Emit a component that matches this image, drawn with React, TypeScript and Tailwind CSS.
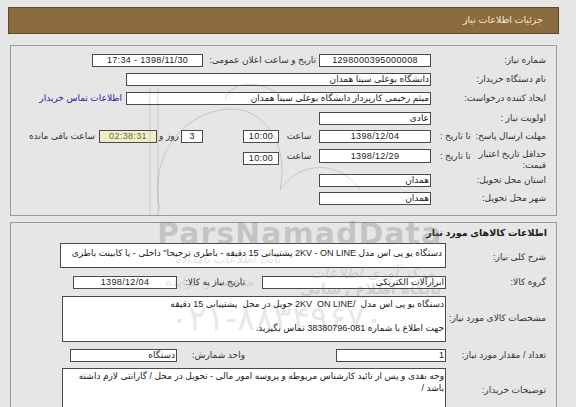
import React from "react";

const Box = ({ className = "", children }: { className?: string; children?: React.ReactNode }) => (
  <div className={`bg-white border border-[#4a4a4a] shrink-0 flex items-center text-[9px] leading-none text-[#1a1a1a] overflow-hidden whitespace-nowrap ${className}`}>
    {children}
  </div>
);

export default function App() {
  return (
    <div
      dir="rtl"
      className="relative w-[576px] h-[407px] overflow-hidden bg-[#e6e6e6] font-['Liberation_Sans','DejaVu_Sans',sans-serif] text-[9px] text-[#333]"
    >
      {/* Header */}
      <div className="pt-[7px] pl-[8px] pr-[17px]">
        <div className="h-[27px] bg-[#8c6b3f] border border-[#5e4626] flex items-center pr-[15px] text-[#f3ead8] text-[9.5px]">
          جزئیات اطلاعات نیاز
        </div>
      </div>

      {/* Panel 1 */}
      <div className="mt-[11px] ml-[10px] mr-[19px] h-[171px] border border-[#9a9a9a] pt-[8px]">
        {/* row 1 */}
        <div className="flex items-center h-[13px]">
          <div className="w-[125px] pr-[10px] shrink-0">شماره نیاز:</div>
          <Box className="w-[112px] h-[13px] justify-center tracking-[0.35px]">1298000395000008</Box>
          <div className="w-[116px] pr-[3px] shrink-0 whitespace-nowrap">تاریخ و ساعت اعلان عمومی:</div>
          <Box className="w-[111px] h-[13px] justify-center tracking-[0.35px]">1398/11/30 - 17:34</Box>
        </div>
        {/* row 2 */}
        <div className="flex items-center h-[13px] mt-[6px]">
          <div className="w-[125px] pr-[10px] shrink-0">نام دستگاه خریدار:</div>
          <Box className="w-[305px] h-[13px] pr-[1px]">دانشگاه بوعلی سینا همدان</Box>
        </div>
        {/* row 3 */}
        <div className="flex items-center h-[13px] mt-[6px]">
          <div className="w-[125px] pr-[10px] shrink-0">ایجاد کننده درخواست:</div>
          <Box className="w-[305px] h-[13px] pr-[1px]">میثم رحیمی کارپرداز دانشگاه بوعلی سینا همدان</Box>
          <div className="mr-[4px] text-[#2323a8] whitespace-nowrap">اطلاعات تماس خریدار</div>
        </div>
        {/* row 4 */}
        <div className="flex items-center h-[13px] mt-[7px]">
          <div className="w-[125px] pr-[10px] shrink-0">اولویت نیاز :</div>
          <Box className="w-[112px] h-[13px] pr-[1px]">عادی</Box>
        </div>
        {/* row 5 */}
        <div className="flex items-center h-[13px] mt-[5px]">
          <div className="w-[125px] pr-[10px] pl-[9px] shrink-0 flex justify-between whitespace-nowrap">
            <span>مهلت ارسال پاسخ:</span>
            <span>تا تاریخ :</span>
          </div>
          <Box className="w-[112px] h-[13px] justify-center tracking-[0.35px]">1398/12/04</Box>
          <div className="w-[40px] text-center shrink-0">ساعت</div>
          <Box className="w-[36px] h-[13px] justify-center tracking-[0.35px]">10:00</Box>
          <div className="w-[40px] shrink-0" />
          <Box className="w-[22px] h-[13px] justify-center">3</Box>
          <div className="w-[24px] text-center shrink-0 whitespace-nowrap">روز و</div>
          <Box className="w-[58px] h-[13px] justify-center tracking-[0.35px] !bg-[#efefc6] !text-[#6b6b50]">02:38:31</Box>
          <div className="mr-[4px] whitespace-nowrap">ساعت باقی مانده</div>
        </div>
        {/* row 6 */}
        <div className="flex items-start mt-[6px]">
          <div className="w-[125px] pr-[10px] pl-[9px] shrink-0 flex justify-between">
            <span className="w-[70px] leading-[11px]">حداقل تاریخ اعتبار قیمت:</span>
            <span className="mt-[2px] leading-[11px] whitespace-nowrap">تا تاریخ :</span>
          </div>
          <Box className="w-[112px] h-[14px] justify-center tracking-[0.35px]">1398/12/29</Box>
          <div className="w-[40px] text-center shrink-0 mt-[2px] leading-[11px]">ساعت</div>
          <Box className="w-[36px] h-[13px] mt-[3px] justify-center tracking-[0.35px]">10:00</Box>
        </div>
        {/* row 7 */}
        <div className="flex items-center h-[13px] mt-[3px]">
          <div className="w-[125px] pr-[10px] shrink-0">استان محل تحویل:</div>
          <Box className="w-[112px] h-[13px] pr-[1px]">همدان</Box>
        </div>
        {/* row 8 */}
        <div className="flex items-center h-[13px] mt-[5px]">
          <div className="w-[125px] pr-[10px] shrink-0">شهر محل تحویل:</div>
          <Box className="w-[112px] h-[13px] pr-[1px]">همدان</Box>
        </div>
      </div>

      {/* Panel 2 */}
      <div className="mt-[6px] ml-[10px] mr-[19px] h-[200px] border border-[#9a9a9a] pt-[3px]">
        <div className="pr-[9px] font-bold leading-[14px] text-[#222] text-[9.5px]">اطلاعات کالاهای مورد نیاز</div>
        {/* r1 */}
        <div className="flex items-center mt-[3px]">
          <div className="w-[110px] pr-[10px] shrink-0 mt-[4px]">شرح کلی نیاز:</div>
          <Box className="w-[386px] h-[25px] !items-start pt-[5px] px-[3px]">
            دستگاه یو پی اس مدل 2KV - ON LINE پشتیبانی 15 دقیقه - باطری ترجیحا" داخلی - یا کابینت باطری
          </Box>
        </div>
        {/* r2 */}
        <div className="flex items-center mt-[8px]">
          <div className="w-[110px] pr-[10px] shrink-0">گروه کالا:</div>
          <Box className="w-[184px] h-[13px] pr-[1px]">ابزارآلات الکتریکی</Box>
          <div className="w-[85px] pr-[17px] shrink-0 whitespace-nowrap">تاریخ نیاز به کالا:</div>
          <Box className="w-[104px] h-[13px] justify-center tracking-[0.35px]">1398/12/04</Box>
        </div>
        {/* r3 */}
        <div className="flex items-center mt-[6px]">
          <div className="w-[110px] pr-[10px] shrink-0 whitespace-nowrap">مشخصات کالای مورد نیاز:</div>
          <Box className="w-[384px] h-[46px] !items-start !whitespace-normal px-[1px]">
            <div className="leading-[12px] pt-[1px]">
              <div className="whitespace-pre">دستگاه یو پی اس مدل  /2KV  ON LINE حویل در محل  پشتیبانی 15 دقیقه</div>
              <div>&nbsp;</div>
              <div>جهت اطلاع با شماره 081-38380796 تماس بگیرید.</div>
            </div>
          </Box>
        </div>
        {/* r4 */}
        <div className="flex items-center mt-[7px]">
          <div className="w-[110px] pr-[10px] shrink-0 whitespace-nowrap">تعداد / مقدار مورد نیاز:</div>
          <Box className="w-[110px] h-[13px] pr-[1px]">1</Box>
          <div className="w-[159px] pr-[91px] shrink-0 whitespace-nowrap">واحد شمارش:</div>
          <Box className="w-[107px] h-[13px] pr-[1px]">دستگاه</Box>
        </div>
        {/* r5 */}
        <div className="flex items-center mt-[6px]">
          <div className="w-[110px] pr-[10px] shrink-0">توضیحات خریدار:</div>
          <Box className="w-[384px] h-[46px] !items-start !whitespace-normal px-[1px]">
            <div className="leading-[12px] pt-[1px]">
              وجه نقدی و پس از تائید کارشناس مربوطه و پروسه امور مالی - تحویل در محل / گارانتی لازم داشته باشد /
            </div>
          </Box>
        </div>
      </div>

      {/* Watermark */}
      <div className="pointer-events-none absolute inset-0" dir="ltr">
        <svg className="absolute left-0 top-0" width="576" height="407" viewBox="0 0 576 407" fill="none" stroke="rgba(90,90,90,0.22)" strokeWidth="1">
          <path d="M150 88 L150 215 M158 88 L158 215" />
          <path d="M160 210 C150 170 170 120 220 110 C260 102 290 140 280 190" />
          <path d="M225 100 C230 80 260 80 280 95" />
          <path d="M280 190 C300 160 340 160 360 190" />
        </svg>
        <div className="absolute left-[157px] top-[211px] text-[30px] font-bold tracking-[1px] text-[rgba(110,110,110,0.28)] font-['DejaVu_Sans',sans-serif]">
          ParsNamadData
        </div>
        <div dir="rtl" className="absolute left-[175px] top-[250px] text-[12px] italic text-[rgba(110,110,110,0.22)] font-['DejaVu_Sans',sans-serif]">
          بانک اطلاعات نامداده
        </div>
        <div dir="rtl" className="absolute left-[310px] top-[262px] text-[15px] italic text-[rgba(110,110,110,0.22)] font-['DejaVu_Sans',sans-serif]">
          مرکز آوری اطلاعات
        </div>
        <div dir="rtl" className="absolute left-[165px] top-[272px] text-[13px] text-[rgba(110,110,110,0.2)] font-['DejaVu_Sans',sans-serif]">
          مناقصه و مزایده
        </div>
        <div dir="rtl" className="absolute left-[300px] top-[278px] text-[15px] font-bold text-[rgba(110,110,110,0.2)] font-['DejaVu_Sans',sans-serif]">
          پایگاه اطلاع رسانی
        </div>
        <div className="absolute left-[170px] top-[293px] text-[34px] text-[rgba(110,110,110,0.18)] font-['DejaVu_Sans',sans-serif]">
          ۰۲۱-۸۸۳۴۹۶۷۰
        </div>
      </div>
    </div>
  );
}
